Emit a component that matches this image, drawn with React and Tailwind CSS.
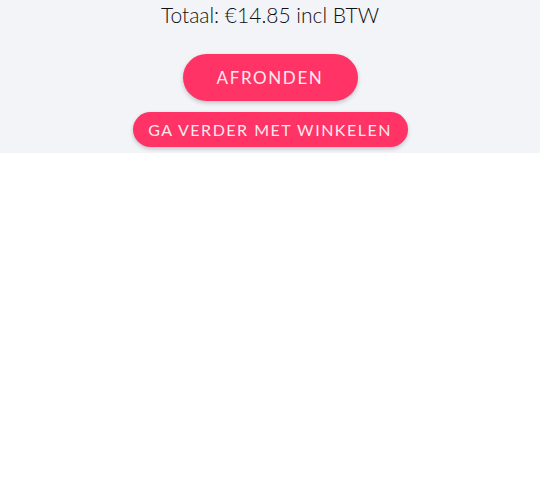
export default function App() {
  return (
    <div className="w-[540px] h-[500px] bg-white" style={{ fontFamily: "Lato, 'Noto Sans', sans-serif" }}>
      <div className="h-[153px] bg-[#f3f4f8] flex flex-col items-center">
        <div className="mt-[1px] text-[21px] leading-[28px] text-[#111] font-light">Totaal: €14.85 incl BTW</div>
        <button className="mt-[25px] w-[175px] h-[47px] rounded-full bg-[#ff3366] text-[#fde8ee] text-[17px] tracking-[1.6px] shadow-[0_2px_4px_rgba(0,0,0,0.2)]">AFRONDEN</button>
        <button className="mt-[11px] w-[275px] h-[35px] rounded-full bg-[#ff3366] text-[#fde8ee] text-[16px] tracking-[1.5px] shadow-[0_2px_4px_rgba(0,0,0,0.2)]">GA VERDER MET WINKELEN</button>
      </div>
    </div>
  );
}
